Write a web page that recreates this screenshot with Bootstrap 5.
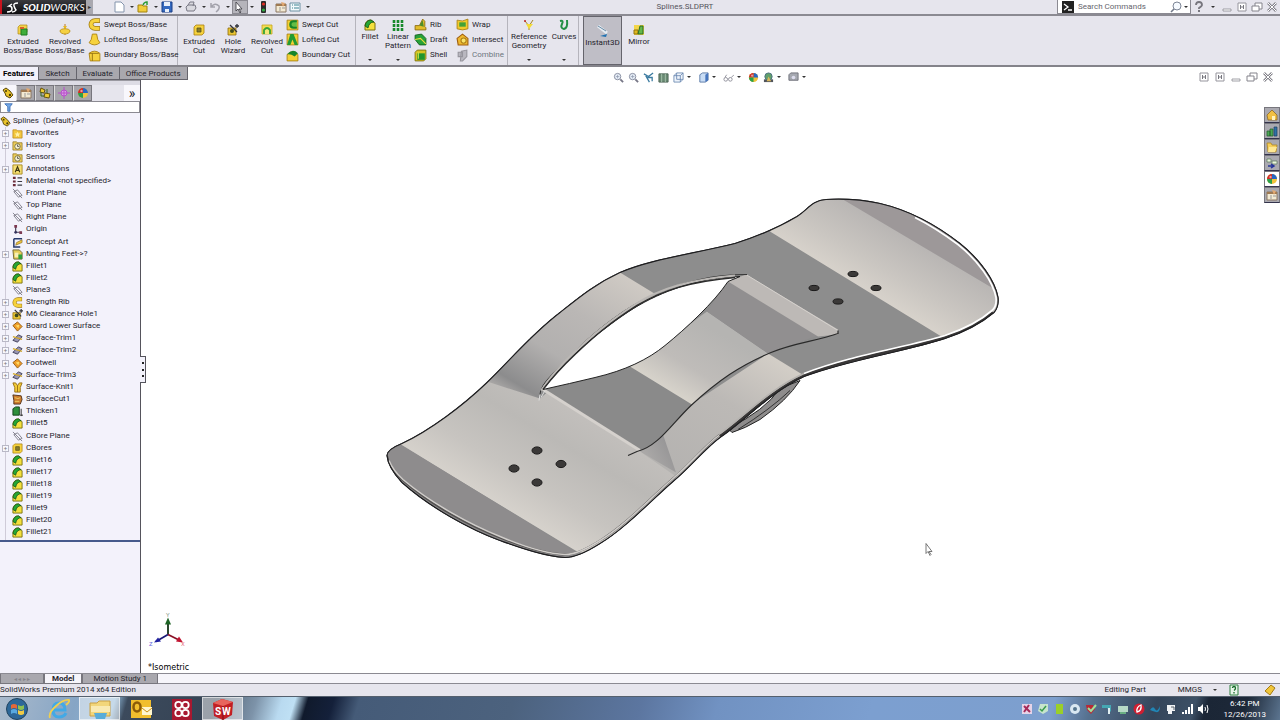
<!DOCTYPE html>
<html lang="en">
<head>
<meta charset="utf-8">
<meta name="viewport" content="width=device-width, initial-scale=1">
<title>Splines.SLDPRT</title>
<link href="https://cdn.jsdelivr.net/npm/bootstrap@5.3.0/dist/css/bootstrap.min.css" rel="stylesheet">
<style>
:root{--face:#e6e5ed;--line:#77767d;--ui:Roboto,"Noto Sans",sans-serif}
body{font-family:var(--ui);font-size:8px;line-height:12px;color:#25242c;background:#fff;overflow:hidden}
button{font-family:inherit;font-size:inherit;line-height:inherit;color:inherit;background:none;border:0;padding:0}
svg{display:block;flex:none}
.ic{width:12px;height:12px}
.titlebar{background:var(--face);height:16px;border-bottom:2px solid #8b8a92}
.brand{width:86px;background:linear-gradient(#3a3a3e,#0b0b0d);border-left:2px solid #c8141e;color:#fff;font-family:Lato,sans-serif;font-size:10px;font-weight:900;font-style:italic}
.brand span{font-weight:400}
.flyout{width:7px;background:#a9a8af;font-size:6px;color:#333}
.caret{width:10px;height:12px;display:flex;align-items:center;justify-content:center}
.caret::after{content:"";border:2px solid transparent;border-top-color:#333;border-bottom:0}
.qat{padding-left:20px}
.qat .tool{width:14px}
.pressed{background:#b5b4bb;outline:1px solid #8b8a92}
.doc{color:#55545c}
.search{width:134px;background:#fff;border:1px solid #8b8a92;border-top:0;height:14px}
.search input,.filter input{border:0;outline:0;background:transparent;min-width:0;font-size:8px;line-height:10px;padding:0 4px;color:#444}
.search input::placeholder{color:#66656d;opacity:1}
.winbtns{gap:3px;padding:0 2px}
.ribbon{background:var(--face);height:51px;border-bottom:2px solid #84838a;padding-left:2px}
.big{display:flex;flex-direction:column;align-items:center;line-height:9px;text-align:center;white-space:nowrap;padding-top:8px}
.big .ic{margin-bottom:1px}
.big.menu{padding-top:3px;position:relative}
.big.menu .caret{margin-top:auto;height:10px}
.w42{width:42px}.w34{width:34px}.w28{width:28px}.w39{width:39px}
.stack{display:flex;flex-direction:column;justify-content:space-around;padding:1px 0 2px 2px}
.stack button{display:flex;align-items:center;gap:3px;white-space:nowrap}
.stack .ic{width:13px;height:13px}
.sep{border-right:1px solid #b5b4bc}
.s92{width:92px}.s72{width:72px}.s42{width:42px}.s54{width:54px}
.instant{background:#bfbec6;border:1px solid #65646c}
.side{flex:0 0 141px;width:141px;min-width:0;position:relative;background:#f3f2fb;border-right:1px solid #55545c}
.cmdtabs{height:13px;z-index:2;position:relative;width:0}
.cmdtabs button{background:#a9a8ae;border:1px solid #65646c;border-top:0;white-space:nowrap;padding:0 6px;line-height:11px;margin-right:-1px}
.cmdtabs .on{background:#f3f2fb;font-weight:700;color:#000;border-color:#f3f2fb;padding:0 4px 0 2px}
.band{height:5px;background:#dddce5;border-top:1px solid #9a99a1}
.panetabs{height:16px;background:var(--face)}
.panetabs button{width:19px;height:16px;background:#a6a5ab;border:1px solid #77767d;border-left-color:#ddd;display:flex;align-items:center;justify-content:center}
.panetabs .on{background:#f8f7fc;border-color:#f8f7fc;width:16px}
.more{font-size:14px}
.filter{background:#fff;border:1px solid #8b8a92;height:12px;padding-left:3px}
.filter .ic{width:9px;height:9px}
.tree{padding-top:2px}
.tree,.tree ul{list-style:none;margin:0}
.tree ul{padding:0 0 1px}
.node{display:flex;align-items:center;height:12px;white-space:nowrap;padding-left:12px;position:relative;gap:3px}
.node.root{padding-left:0;gap:2px}
.node .ic{width:11px;height:11px}
.exp::before{content:"+";position:absolute;left:2px;width:7px;height:7px;border:1px solid #b9b8c6;background:#f8f8fd;font-size:6px;line-height:4px;text-align:center;color:#777}
.kids{background:linear-gradient(#cfcbd8,#cfcbd8) 5px 0/1px 100% no-repeat;padding-bottom:1px}
.rollback{height:2px;background:#465a8c}
.grip{position:absolute;left:140px;top:289px;width:6px;height:27px;border:1px solid #55545c;border-left:0;background:#f3f2fb;display:flex;flex-direction:column;justify-content:space-evenly;align-items:center;z-index:2}
.grip i{width:2px;height:2px;background:#222}
.view{position:relative;min-width:0;background:#fff}
.view .scene{width:100%;height:100%}
.hud{position:absolute;top:4px;left:0;right:0;height:12px}
.hud .ic{width:11px;height:11px}
.docbtns{position:absolute;top:4px;right:6px;gap:4px}
.task{position:absolute;right:0;top:40px;width:16px}
.task button{height:16px;width:16px;background:#aaa9b0;border:1px solid #77767d;border-bottom-color:#33334d;display:flex;align-items:center;justify-content:center}
.task .on{background:#fff}
.btabs{height:11px;border-top:1px solid #8b8a92;background:#f6f5fa;box-shadow:inset 0 -1px #8b8a92}
.btabs button{line-height:9px;padding:0 10px;background:#a9a8ae;border:1px solid #77767d;border-top:0}
.btabs .on{background:#f6f5fa;font-weight:700;padding:0 7px}
.btabs .nav4{padding:0;width:44px;color:#85848a;font-size:6px}
.status{height:12px;background:var(--face)}
.taskbar{height:24px;color:#fff;border-top:1px solid #55606e;background:linear-gradient(107deg,#a9b9cb 0,#86a5c5 6%,#8db4d4 9%,#3c4a5c 10%,#354354 17%,#5f7286 18%,#7d93a9 20%,#b9daf0 22%,#bfe0f4 23%,#101a2c 24%,#14203a 26%,#455b78 28%,#4c627e 40%,#5c76a0 50%,#7192c2 56%,#7c9fd0 68%,#7d9fce 82%,#56718f 85%,#34455a 90%,#3d5066 93%,#1b2636 94%,#1d2838 97%,#5c7590 100%)}
.app{width:41px;height:23px;display:flex;justify-content:center;align-items:center}
.app.w34{width:34px}
.app svg{width:22px;height:22px}
.app.open{background:#ffffff80;border:1px solid #ffffff90}
.tray{gap:4px;padding-right:14px}
.clock{line-height:11px;text-align:center;padding-left:10px}
</style>
</head>
<body>
<svg width="0" height="0" class="position-absolute" aria-hidden="true">
<defs>
<symbol id="boss" viewBox="0 0 12 12"><path d="M1 3 3 1h7v7l-2 2H1z" fill="#f3d34a" stroke="#b08a16" stroke-width=".7"/><path d="M4 5h6v6H4z" fill="#3fae3b" stroke="#1d7a22"/><path d="M3 3h4v2H3z" fill="#d65f2a"/></symbol>
<symbol id="revolve" viewBox="0 0 12 12"><path d="M6 0v11" stroke="#c07b1c"/><path d="M1 7c0-3 10-3 10 0 0 2-3 3-5 3S1 9 1 7z" fill="#f5d143" stroke="#b68c14" stroke-width=".8"/><path d="M4 2h4L6 5z" fill="#e6b820"/></symbol>
<symbol id="sweep" viewBox="0 0 12 12"><path d="M11 2.500H6.500C1.500 2.500 1.500 9.500 6.500 9.500H11" fill="none" stroke="#9f780e" stroke-width="4.400"/><path d="M10.500 2.500h-4C1.500 2.500 1.500 9.500 6.500 9.500h4" fill="none" stroke="#f6d23d" stroke-width="3"/></symbol>
<symbol id="loft" viewBox="0 0 12 12"><path d="M4 1h4l1 5 2 3q-5 4-10 0l2-3z" fill="#f6d23d" stroke="#a97f10" stroke-width=".8"/></symbol>
<symbol id="bound" viewBox="0 0 12 12"><path d="M1 4q5-4 10 0v7H2z" fill="#f6d23d" stroke="#a97f10" stroke-width=".8"/><path d="M1 4h9M4 4v7" stroke="#8f6d0d" stroke-width=".8"/></symbol>
<symbol id="cut" viewBox="0 0 12 12"><path d="M1 3 3 1h8v8l-2 2H1z" fill="#f6d23d" stroke="#a97f10" stroke-width=".8"/><path d="M4 4h4v4H4z" fill="#897d2c" stroke="#55521e" stroke-width=".8"/></symbol>
<symbol id="hole" viewBox="0 0 12 12"><path d="M1 4h8v7H1z" fill="#e9c533" stroke="#8f6d0d" stroke-width=".8"/><circle cx="5" cy="7" r="2" fill="#3f4b1b"/><path d="M3 1l7 7M10 0v4M8 2h4" stroke="#30323a" stroke-width="1.3"/></symbol>
<symbol id="revcut" viewBox="0 0 12 12"><path d="M1 1h10v9H1z" fill="#f3dc55" stroke="#c4a51b" stroke-width=".8"/><path d="M3 10V6q3-4 6 0v4" fill="#f6e87a" stroke="#35a436" stroke-width="1.8"/></symbol>
<symbol id="gcut" viewBox="0 0 12 12"><path d="M1 2h10v9H1z" fill="#f3d034" stroke="#a97f10" stroke-width=".8"/><path d="M10 3H7C3 3 3 9 7 9h3" fill="#64bd45" stroke="#168528" stroke-width="2"/></symbol>
<symbol id="gloft" viewBox="0 0 12 12"><path d="M1 1h10v10H1z" fill="#f3d034" stroke="#a97f10" stroke-width=".8"/><path d="M4 1h3l4 10H8L6 6l-2 5H1z" fill="#229a32"/></symbol>
<symbol id="gbound" viewBox="0 0 12 12"><path d="M1 5q5-5 10 0v6H1z" fill="#f3d034" stroke="#a97f10" stroke-width=".8"/><path d="M1 5q5-6 10-1l-3 3q-4-3-7-2z" fill="#17852a"/></symbol>
<symbol id="fillet" viewBox="0 0 12 12"><path d="M1 11V6q1-5 6-5l4 3v7z" fill="#f4e03d" stroke="#7c720f"/><path d="M1 7q1-6 6-6l3 2q-5 0-6 6z" fill="#25a934" stroke="#114f17" stroke-width=".8"/></symbol>
<symbol id="pattern" viewBox="0 0 12 12"><path d="M2 1v11M6 1v11M10 1v11" stroke="#188a2c" stroke-width="2.6" stroke-dasharray="3 1"/></symbol>
<symbol id="rib" viewBox="0 0 12 12"><path d="M1 7h4l3-6 2 2v5l1 1v2H1z" fill="#e2bd2a" stroke="#8a6a10" stroke-width=".8"/><path d="M5 7l3-5 1 6z" fill="#4c8e2b"/></symbol>
<symbol id="draft" viewBox="0 0 12 12"><path d="M1 2l6-1 4 4v6H5L1 6z" fill="#27a238" stroke="#0f5e1c" stroke-width=".8"/><path d="M1 6l5-1 5 5" stroke="#eedd3f" fill="none"/></symbol>
<symbol id="shell" viewBox="0 0 12 12"><path d="M1 3l2-2h8v8l-2 2H1z" fill="#d8c322" stroke="#77700f" stroke-width=".8"/><path d="M3 4h7v6H3z" fill="#20952d"/><path d="M4 3v6" stroke="#d1e349"/></symbol>
<symbol id="wrap" viewBox="0 0 12 12"><path d="M1 2q5 2 10-1v9q-5 2-10 0z" fill="#f2ca2b" stroke="#a97f10" stroke-width=".8"/><path d="M3 4h6v4H3z" fill="#43a237"/></symbol>
<symbol id="isect" viewBox="0 0 12 12"><path d="M1 5l5-4 5 4v6H2z" fill="#efb92f" stroke="#a05f10"/><circle cx="7" cy="7" r="2.4" fill="#f8e36a" stroke="#ab7d16"/></symbol>
<symbol id="combine" viewBox="0 0 12 12"><path d="M2 3h4v4H2zM5 2l5-1v6l-4 4H4z" fill="#b9b8c0" stroke="#96959d"/></symbol>
<symbol id="refgeo" viewBox="0 0 12 12"><path d="M2 2l4 5 4-6M6 7v4" fill="none" stroke="#a8861d"/><path d="M3 5l7 0-4 5z" fill="#f3dc34"/><circle cx="2" cy="2" r="1" fill="#b22"/></symbol>
<symbol id="curves" viewBox="0 0 12 12"><path d="M2 2q4-1 2 3t2 5q4-1 3-9" fill="none" stroke="#238f46" stroke-width="2"/></symbol>
<symbol id="instant" viewBox="0 0 12 12"><path d="M1 1l9 7" stroke="#e6edf3" stroke-width="3"/><path d="M1 1l8 5" stroke="#688aa5"/><path d="M3 11l7-2-1 3z" fill="#2172b2"/></symbol>
<symbol id="mirror" viewBox="0 0 12 12"><path d="M1 1h10v10H1z" fill="#f3d649"/><path d="M1 6h4v4H1z" fill="#e0ba1c" stroke="#937211"/><path d="M7 2h3v8H5z" fill="#65b84a" stroke="#2c6d25"/></symbol>
<symbol id="part" viewBox="0 0 12 12"><path d="M1 3l3-2 4 3 3 4-3 3-4-2-1-3z" fill="#eac42b" stroke="#594708"/><circle cx="4" cy="4" r="1" fill="#473a0a"/><circle cx="8" cy="8" r="1.2" fill="#473a0a"/></symbol>
<symbol id="props" viewBox="0 0 12 12"><path d="M1 3h10v8H1z" fill="#f3ead3" stroke="#8a7762"/><path d="M1 4h10" stroke="#9f7a53" stroke-width="2"/><path d="M5 6v4M7 7h3" stroke="#999"/><path d="M6 1l4 1-2 4z" fill="#e2a871"/></symbol>
<symbol id="config" viewBox="0 0 12 12"><path d="M2 1l4 2-1 3-4-1zM6 6l5 1-1 4-5-1z" fill="#edcc34" stroke="#65520d"/><path d="M2 5v4h3M8 2v4" stroke="#38671f" fill="none"/></symbol>
<symbol id="target" viewBox="0 0 12 12"><circle cx="6" cy="6" r="3" fill="#dd9be8" stroke="#b750ca"/><path d="M6 0v12M0 6h12" stroke="#b750ca"/></symbol>
<symbol id="ball" viewBox="0 0 12 12"><circle cx="6" cy="6" r="5" fill="#f0c33c"/><path d="M6 6V1a5 5 0 0 1 5 5z" fill="#2667c4"/><path d="M6 6V1a5 5 0 0 0-5 5z" fill="#cf2c29"/><path d="M6 6H1a5 5 0 0 0 5 5z" fill="#2ba04a"/><circle cx="4.500" cy="4" r="1.2" fill="#fff8"/></symbol>
<symbol id="funnel" viewBox="0 0 12 12"><path d="M1 1h10L8 5v6H5V5z" fill="#72a7e6" stroke="#2c61ad"/></symbol>
<symbol id="star" viewBox="0 0 12 12"><path d="M1 2h4l1 1h5v8H1z" fill="#f3c73e" stroke="#b9881a" stroke-width=".8"/><path d="M6 4l1 2h2L7.500 7.500 8 10 6 8.500 4 10l.5-2.500L3 6h2z" fill="#fff1a8"/></symbol>
<symbol id="hist" viewBox="0 0 12 12"><path d="M1 2h4l1 1h5v8H1z" fill="#efcf5b" stroke="#8c721f" stroke-width=".8"/><circle cx="6" cy="7" r="3" fill="#f7f1d0" stroke="#5a5630" stroke-width=".8"/><path d="M6 5v2h2" fill="none" stroke="#333" stroke-width=".8"/></symbol>
<symbol id="anno" viewBox="0 0 12 12"><path d="M1 1h10v10H1z" fill="#f6df72" stroke="#a98a24"/><path d="M3.500 9 6 3l2.500 6M4.500 7h3" fill="none" stroke="#3b3410" stroke-width="1.200"/></symbol>
<symbol id="mat" viewBox="0 0 12 12"><path d="M1 2h3M1 6h3M1 10h3" stroke="#6b2b39" stroke-width="2.400"/><path d="M6 2h5M6 6h5M6 10h5" stroke="#3b3a44" stroke-width="1.200"/></symbol>
<symbol id="plane" viewBox="0 0 12 12"><path d="M2 4l4-2 5 6-4 2zM1 1l10 10" fill="none" stroke="#73727e" stroke-width=".9"/></symbol>
<symbol id="origin" viewBox="0 0 12 12"><path d="M4 2v7h6" fill="none" stroke="#463f55" stroke-width="1.300"/><path d="M2.500 1h3v3h-3zM8 8h3v3H8z" fill="#7c3850"/><circle cx="4" cy="9" r="1.500" fill="#33315c"/></symbol>
<symbol id="sketch" viewBox="0 0 12 12"><path d="M2 2h9M2 2v9h7" fill="none" stroke="#26386b" stroke-width="1.600"/><path d="M4 9l1-3 6-3v3z" fill="#edc33d" stroke="#755b16" stroke-width=".6"/></symbol>
<symbol id="feet" viewBox="0 0 12 12"><path d="M1 1h7l3 3v7H2z" fill="#e4cb58" stroke="#6e6430"/><path d="M3 4h4v5H3z" fill="#f7efb6"/><path d="M7 6h4v5H7z" fill="#2e9e3d"/></symbol>
<symbol id="surf" viewBox="0 0 12 12"><path d="M1 5l5-4 5 5-5 5z" fill="#ef9d29" stroke="#92580d"/><path d="M4 5l4-1-1 4z" fill="#ffdc68"/></symbol>
<symbol id="trim" viewBox="0 0 12 12"><path d="M1 8l6-6 4 2-5 6z" fill="#9996b4" stroke="#3d3b55"/><path d="M1 4l10 3" stroke="#d1a72b" stroke-width="1.500"/></symbol>
<symbol id="knit" viewBox="0 0 12 12"><path d="M1 1h3l2 3 2-3h3L9 6v5H3V6z" fill="#f3cd38" stroke="#976c12"/><path d="M6 4v7" stroke="#976c12"/></symbol>
<symbol id="scut" viewBox="0 0 12 12"><path d="M1 1l9 1 1 4-2 5H2V7z" fill="#cd7b2d" stroke="#51311a"/><path d="M3 4q4 2 6 0M3 8h5" stroke="#f0cf62" fill="none"/></symbol>
<symbol id="thick" viewBox="0 0 12 12"><path d="M1 3l3-2h4v9H1z" fill="#2e8f3b" stroke="#123f18"/><path d="M10 3v8M9 10h3" stroke="#222"/></symbol>
<symbol id="page" viewBox="0 0 12 12"><path d="M2 1h6l3 3v7H2z" fill="#fff" stroke="#8494ac"/></symbol>
<symbol id="open" viewBox="0 0 12 12"><path d="M1 4h4l1 1h4v6H1z" fill="#f1cd3b" stroke="#a2820e"/><path d="M6 4q1-3 4-3v3" fill="none" stroke="#2d9b38" stroke-width="1.500"/></symbol>
<symbol id="save" viewBox="0 0 12 12"><path d="M1 1h10v10H1z" fill="#356ac0" stroke="#1b3e86"/><path d="M3 1h6v4H3zM4 8h4v3H4z" fill="#e9f0fa"/></symbol>
<symbol id="print" viewBox="0 0 12 12"><path d="M3 4l2-3h4L8 5M1 6l2-2h7l1 3-2 3H2z" fill="#d9d9df" stroke="#797985"/></symbol>
<symbol id="undo" viewBox="0 0 12 12"><path d="M2 2v4h4M2 6q4-5 8-1 1 3-3 6" fill="none" stroke="#a2a1ab" stroke-width="1.500"/></symbol>
<symbol id="arrow" viewBox="0 0 12 12"><path d="M3 1v9l2-2 2 4 1-1-2-3h3z" fill="#fff" stroke="#44434b" stroke-width=".9"/></symbol>
<symbol id="light" viewBox="0 0 12 12"><rect x="4" y="0" width="5" height="12" rx="1" fill="#2b2b2b"/><circle cx="6.500" cy="3" r="1.600" fill="#e02d24"/><circle cx="6.500" cy="9" r="1.600" fill="#2fab43"/></symbol>
<symbol id="list" viewBox="0 0 12 12"><path d="M1 2h10v8H1z" fill="#f3f9fb" stroke="#6d91a3"/><path d="M3 4h1M3 7h1M5 4h5M5 7h5" stroke="#3d8392"/></symbol>
<symbol id="mag" viewBox="0 0 12 12"><circle cx="5" cy="5" r="3.500" fill="#eaf1fa" stroke="#81889b"/><path d="M8 8l3 3" stroke="#777787" stroke-width="2"/><path d="M3 5h4M5 3v4" stroke="#8e97ac" stroke-width=".8"/></symbol>
<symbol id="lens" viewBox="0 0 12 12"><circle cx="7" cy="5" r="4" fill="#f6faff" stroke="#7d8696"/><path d="M4 8l-3 3" stroke="#727a8a" stroke-width="1.600"/></symbol>
<symbol id="prev" viewBox="0 0 12 12"><path d="M1 2l5 3 5-4M3 4l4 7M5 6h5v4" fill="none" stroke="#3a7aa0" stroke-width="1.400"/></symbol>
<symbol id="section" viewBox="0 0 12 12"><path d="M1 2h10v9H1z" fill="#698a74" stroke="#4c6455"/><path d="M4 2v9M8 2v9" stroke="#a9c4ad"/></symbol>
<symbol id="cube" viewBox="0 0 12 12"><path d="M1 4h7v7H1zM1 4l3-3h7v7l-3 3M8 4l3-3M4 1v7h7" fill="#dbe8f8" fill-opacity=".5" stroke="#6785af" stroke-width=".9"/></symbol>
<symbol id="shaded" viewBox="0 0 12 12"><path d="M2 3l3-2h6v8l-3 2H2z" fill="#c9ddf5" stroke="#5877a5"/><path d="M8 3l3-2v8l-3 2z" fill="#4775bd"/></symbol>
<symbol id="glasses" viewBox="0 0 12 12"><circle cx="3" cy="8" r="2" fill="none" stroke="#8e8e99"/><circle cx="8" cy="8" r="2" fill="none" stroke="#8e8e99"/><path d="M2 6l2-3M9 6l3-3" stroke="#8e8e99"/></symbol>
<symbol id="scene" viewBox="0 0 12 12"><path d="M1 8h10v3H1z" fill="#50545c"/><circle cx="6" cy="5" r="4" fill="#62a06c" stroke="#486d80"/><path d="M4 10l2-5 3 5" fill="#d9b65a"/></symbol>
<symbol id="screen" viewBox="0 0 12 12"><path d="M1 3l2-2h8v8H1z" fill="#a6a9b1" stroke="#6d7078"/><circle cx="6" cy="6" r="2" fill="#dde"/></symbol>
<symbol id="cmd" viewBox="0 0 12 12"><path d="M0 0h12v12H0z" fill="#222"/><path d="M2 3l4 3-4 3M6 9h4" stroke="#fff" fill="none" stroke-width="1.300"/></symbol>
<symbol id="help" viewBox="0 0 12 12"><path d="M3 4q0-3 3-3t3 3q0 1-3 3v1" fill="none" stroke="#77767e" stroke-width="1.800"/><path d="M5 9h2v2H5z" fill="#77767e"/></symbol>
<symbol id="min" viewBox="0 0 12 12"><path d="M2 8h8v2H2z" fill="#fff" stroke="#8b8a92" stroke-width=".8"/></symbol>
<symbol id="tile" viewBox="0 0 12 12"><path d="M2 2h8v8H2z" fill="#fff" stroke="#96959d"/><path d="M4.500 4v4M7.500 4v4M4 6h4" stroke="#77767e"/></symbol>
<symbol id="rest" viewBox="0 0 12 12"><path d="M4 2h7v6H4z" fill="#fff" stroke="#85848c"/><path d="M1 5h7v5H1z" fill="#fff" stroke="#85848c"/></symbol>
<symbol id="close" viewBox="0 0 12 12"><path d="M2 2l8 8M10 2l-8 8" stroke="#85848c" stroke-width="2.600"/><path d="M2 2l8 8M10 2l-8 8" stroke="#fff"/></symbol>
<symbol id="home" viewBox="0 0 12 12"><path d="M1 6l5-5 5 5v5H2z" fill="#f1bf42" stroke="#8d6825" stroke-width=".8"/><path d="M6 7h3v4H6z" fill="#fff2bd"/></symbol>
<symbol id="books" viewBox="0 0 12 12"><path d="M1 6h3v5H1zM4 4h3v7H4z" fill="#4aa853" stroke="#245a2c" stroke-width=".7"/><path d="M8 2h3v9H8z" fill="#2e71a6" stroke="#1c3c5e" stroke-width=".7"/></symbol>
<symbol id="folder" viewBox="0 0 12 12"><path d="M1 2h4l1 2h5l-1 7H2z" fill="#f6cf59" stroke="#b08722" stroke-width=".8"/><path d="M3 6h8l-2 5H2z" fill="#ffe894"/></symbol>
<symbol id="palette" viewBox="0 0 12 12"><path d="M1 2h4v3H1zM6 4h5v3H6z" fill="#eaf5dc" stroke="#637f65" stroke-width=".8"/><path d="M2 9h5M5 7l3 2-3 2" stroke="#26349a" stroke-width="1.500" fill="none"/></symbol>
<linearGradient id="gl" gradientUnits="userSpaceOnUse" x1="488" y1="498" x2="550" y2="394"><stop stop-color="#d6d2cc"/><stop offset=".3" stop-color="#c7c4c0"/><stop offset=".7" stop-color="#bbb9b6"/><stop offset="1" stop-color="#c2bfbc"/></linearGradient>
<linearGradient id="gr" gradientUnits="userSpaceOnUse" x1="856" y1="284" x2="890" y2="227"><stop stop-color="#d7d2cb"/><stop offset=".4" stop-color="#cac6c1"/><stop offset="1" stop-color="#b9b6b4"/></linearGradient>
<linearGradient id="ga" gradientUnits="userSpaceOnUse" x1="638" y1="283" x2="555" y2="421"><stop stop-color="#cfcac4"/><stop offset=".35" stop-color="#bab7b5"/><stop offset=".64" stop-color="#b2b0af"/><stop offset=".92" stop-color="#8c8c8d"/><stop offset="1" stop-color="#a9a7a6"/></linearGradient>
<linearGradient id="gb" gradientUnits="userSpaceOnUse" x1="786" y1="364" x2="706" y2="498"><stop stop-color="#d3cec7"/><stop offset=".4" stop-color="#bcb9b6"/><stop offset="1" stop-color="#b4b2b0"/></linearGradient>
<linearGradient id="gf" gradientUnits="userSpaceOnUse" x1="661" y1="384" x2="699" y2="320"><stop stop-color="#d6d2ca"/><stop offset=".4" stop-color="#bfbcb9"/><stop offset="1" stop-color="#b5b4b2"/></linearGradient>
<linearGradient id="gt" gradientUnits="userSpaceOnUse" x1="645" y1="452" x2="690" y2="428"><stop stop-color="#aaa8a7"/><stop offset=".5" stop-color="#969596"/><stop offset="1" stop-color="#b3b0ae"/></linearGradient>
<path id="outline" d="M387 455Q387 449 402 443C430 430 463 405 487 382C510 360 530 335 560 312C580 296 596 283 620 272C650 259 690 254 735 243Q770 232 797 216C808 209 812 200 826 199C845 198 862 199 880 203C910 210 937 225 960 243C980 259 995 280 998 297Q999 306 994 312Q975 328 945 338C905 351 850 359 804 376C770 392 745 420 720 437C705 448 690 467 673 481C650 501 625 528 600 543Q578 557 565 557C545 556 520 547 500 540C470 529 430 507 402 482Q388 467 387 455Z"/>
<clipPath id="cb"><use href="#outline"/></clipPath>
</defs>
</svg>

<div class="d-flex flex-column vh-100">
<header class="titlebar d-flex align-items-center">
  <div class="brand d-flex align-items-center align-self-stretch ps-1 gap-1"><svg width="13" height="11" viewBox="0 0 13 11"><path d="M1 10q5 0 5-3T3 4l3-2M12 1Q7 1 8 4t2 4q-1 2-4 2" fill="none" stroke="#fff" stroke-width="1.500"/></svg><div>SOLID<span>WORKS</span></div></div>
  <button class="flyout align-self-stretch" aria-label="Show menu">▸</button>
  <div class="qat d-flex align-items-center">
    <button class="tool" aria-label="New"><svg class="ic"><use href="#page"/></svg></button><span class="caret"></span>
    <button class="tool" aria-label="Open"><svg class="ic"><use href="#open"/></svg></button><span class="caret"></span>
    <button class="tool" aria-label="Save"><svg class="ic"><use href="#save"/></svg></button><span class="caret"></span>
    <button class="tool" aria-label="Print"><svg class="ic"><use href="#print"/></svg></button><span class="caret"></span>
    <button class="tool" aria-label="Undo"><svg class="ic"><use href="#undo"/></svg></button><span class="caret"></span>
    <button class="tool pressed" aria-label="Select"><svg class="ic"><use href="#arrow"/></svg></button><span class="caret"></span>
    <button class="tool" aria-label="Rebuild"><svg class="ic"><use href="#light"/></svg></button>
    <button class="tool ms-1" aria-label="File properties"><svg class="ic"><use href="#props"/></svg></button>
    <button class="tool" aria-label="Options"><svg class="ic"><use href="#list"/></svg></button><span class="caret"></span>
  </div>
  <div class="doc flex-grow-1 text-center">Splines.SLDPRT</div>
  <div class="search d-flex align-items-center ps-1"><svg class="ic"><use href="#cmd"/></svg><input class="flex-grow-1" type="search" placeholder="Search Commands" aria-label="Search Commands"><svg class="ic"><use href="#lens"/></svg><span class="caret"></span></div>
  <div class="winbtns d-flex align-items-center">
    <button aria-label="Help"><svg class="ic"><use href="#help"/></svg></button><span class="caret"></span>
    <button aria-label="Minimize"><svg class="ic"><use href="#min"/></svg></button>
    <button aria-label="Tile"><svg class="ic"><use href="#tile"/></svg></button>
    <button aria-label="Restore"><svg class="ic"><use href="#rest"/></svg></button>
    <button aria-label="Close"><svg class="ic"><use href="#close"/></svg></button>
  </div>
</header>

<div class="ribbon d-flex">
  <button class="big w42"><svg class="ic"><use href="#boss"/></svg>Extruded<br>Boss/Base</button>
  <button class="big w42"><svg class="ic"><use href="#revolve"/></svg>Revolved<br>Boss/Base</button>
  <div class="stack s92 sep">
    <button><svg class="ic"><use href="#sweep"/></svg>Swept Boss/Base</button>
    <button><svg class="ic"><use href="#loft"/></svg>Lofted Boss/Base</button>
    <button><svg class="ic"><use href="#bound"/></svg>Boundary Boss/Base</button>
  </div>
  <div class="d-flex ps-1">
  <button class="big w34"><svg class="ic"><use href="#cut"/></svg>Extruded<br>Cut</button>
  <button class="big w34"><svg class="ic"><use href="#hole"/></svg>Hole<br>Wizard</button>
  <button class="big w34"><svg class="ic"><use href="#revcut"/></svg>Revolved<br>Cut</button>
  </div>
  <div class="stack s72 sep">
    <button><svg class="ic"><use href="#gcut"/></svg>Swept Cut</button>
    <button><svg class="ic"><use href="#gloft"/></svg>Lofted Cut</button>
    <button><svg class="ic"><use href="#gbound"/></svg>Boundary Cut</button>
  </div>
  <button class="big menu w28"><svg class="ic"><use href="#fillet"/></svg>Fillet<span class="caret"></span></button>
  <button class="big menu w28"><svg class="ic"><use href="#pattern"/></svg>Linear<br>Pattern<span class="caret"></span></button>
  <div class="stack s42">
    <button><svg class="ic"><use href="#rib"/></svg>Rib</button>
    <button><svg class="ic"><use href="#draft"/></svg>Draft</button>
    <button><svg class="ic"><use href="#shell"/></svg>Shell</button>
  </div>
  <div class="stack s54 sep">
    <button><svg class="ic"><use href="#wrap"/></svg>Wrap</button>
    <button><svg class="ic"><use href="#isect"/></svg>Intersect</button>
    <button class="text-secondary"><svg class="ic"><use href="#combine"/></svg>Combine</button>
  </div>
  <button class="big menu w42"><svg class="ic"><use href="#refgeo"/></svg>Reference<br>Geometry<span class="caret"></span></button>
  <div class="d-flex sep"><button class="big menu w28"><svg class="ic"><use href="#curves"/></svg>Curves<span class="caret"></span></button></div>
  <div class="d-flex ps-1"><button class="big w39 instant"><svg class="ic"><use href="#instant"/></svg>Instant3D</button></div>
  <button class="big w34"><svg class="ic"><use href="#mirror"/></svg>Mirror</button>
</div>

<main class="d-flex flex-grow-1">
  <aside class="side d-flex flex-column">
    <div class="cmdtabs d-flex">
      <button class="on">Features</button><button>Sketch</button><button>Evaluate</button><button>Office Products</button>
    </div>
    <div class="band"></div>
    <div class="panetabs d-flex align-items-center">
      <button class="on" aria-label="Feature tree"><svg class="ic"><use href="#part"/></svg></button>
      <button aria-label="Properties"><svg class="ic"><use href="#props"/></svg></button>
      <button aria-label="Configurations"><svg class="ic"><use href="#config"/></svg></button>
      <button aria-label="Dimensions"><svg class="ic"><use href="#target"/></svg></button>
      <button aria-label="Display"><svg class="ic"><use href="#ball"/></svg></button>
      <button class="more on ms-auto" aria-label="Show display pane">»</button>
    </div>
    <div class="filter d-flex align-items-center"><svg class="ic"><use href="#funnel"/></svg><input class="flex-grow-1" type="text" aria-label="Filter tree"></div>
    <ul class="tree ps-0">
      <li><div class="node root"><svg class="ic"><use href="#part"/></svg>Splines&nbsp; (Default)-&gt;?</div>
      <div class="kids">
      <ul>
        <li class="node exp"><svg class="ic"><use href="#star"/></svg>Favorites</li>
        <li class="node exp"><svg class="ic"><use href="#hist"/></svg>History</li>
        <li class="node"><svg class="ic"><use href="#hist"/></svg>Sensors</li>
        <li class="node exp"><svg class="ic"><use href="#anno"/></svg>Annotations</li>
        <li class="node"><svg class="ic"><use href="#mat"/></svg>Material &lt;not specified&gt;</li>
        <li class="node"><svg class="ic"><use href="#plane"/></svg>Front Plane</li>
        <li class="node"><svg class="ic"><use href="#plane"/></svg>Top Plane</li>
        <li class="node"><svg class="ic"><use href="#plane"/></svg>Right Plane</li>
        <li class="node"><svg class="ic"><use href="#origin"/></svg>Origin</li>
      </ul>
      <ul>
        <li class="node"><svg class="ic"><use href="#sketch"/></svg>Concept Art</li>
        <li class="node exp"><svg class="ic"><use href="#feet"/></svg>Mounting Feet-&gt;?</li>
        <li class="node"><svg class="ic"><use href="#fillet"/></svg>Fillet1</li>
        <li class="node"><svg class="ic"><use href="#fillet"/></svg>Fillet2</li>
        <li class="node"><svg class="ic"><use href="#plane"/></svg>Plane3</li>
        <li class="node exp"><svg class="ic"><use href="#sweep"/></svg>Strength Rib</li>
        <li class="node exp"><svg class="ic"><use href="#hole"/></svg>M6 Clearance Hole1</li>
        <li class="node exp"><svg class="ic"><use href="#surf"/></svg>Board Lower Surface</li>
        <li class="node exp"><svg class="ic"><use href="#trim"/></svg>Surface-Trim1</li>
        <li class="node exp"><svg class="ic"><use href="#trim"/></svg>Surface-Trim2</li>
      </ul>
      <ul>
        <li class="node exp"><svg class="ic"><use href="#surf"/></svg>Footwell</li>
        <li class="node exp"><svg class="ic"><use href="#trim"/></svg>Surface-Trim3</li>
        <li class="node"><svg class="ic"><use href="#knit"/></svg>Surface-Knit1</li>
        <li class="node"><svg class="ic"><use href="#scut"/></svg>SurfaceCut1</li>
        <li class="node"><svg class="ic"><use href="#thick"/></svg>Thicken1</li>
        <li class="node"><svg class="ic"><use href="#fillet"/></svg>Fillet5</li>
      </ul>
      <ul>
        <li class="node"><svg class="ic"><use href="#plane"/></svg>CBore Plane</li>
        <li class="node exp"><svg class="ic"><use href="#cut"/></svg>CBores</li>
        <li class="node"><svg class="ic"><use href="#fillet"/></svg>Fillet16</li>
        <li class="node"><svg class="ic"><use href="#fillet"/></svg>Fillet17</li>
        <li class="node"><svg class="ic"><use href="#fillet"/></svg>Fillet18</li>
        <li class="node"><svg class="ic"><use href="#fillet"/></svg>Fillet19</li>
        <li class="node"><svg class="ic"><use href="#fillet"/></svg>Fillet9</li>
        <li class="node"><svg class="ic"><use href="#fillet"/></svg>Fillet20</li>
        <li class="node"><svg class="ic"><use href="#fillet"/></svg>Fillet21</li>
      </ul>
      </div></li>
    </ul>
    <div class="rollback"></div>
    <div class="grip"><i></i><i></i><i></i></div>
  </aside>

  <section class="view flex-grow-1">
    <svg class="scene position-absolute" viewBox="141 67 1139 605" role="img" aria-label="Board model, isometric view">
      <path d="M800 380Q787 400 760 419Q745 428 732 432L728 428Q765 410 780 388z" fill="#8e8c8c" stroke="#222"/>
      <path d="M790 390Q770 409 738 429" fill="none" stroke="#333"/>
      <use href="#outline" fill="#1c1c1e" stroke="#1c1c1e"/>
      <g clip-path="url(#cb)">
        <path d="M380 180H1010V570H380z" fill="#8d8d8d"/>
        <path d="M845 201 990 286 1010 300V180H830z" fill="#9d9899"/>
        <path d="M770 231 943 337 1000 360 1010 297 990 286 843 199 800 190z" fill="url(#gr)"/>
        <path d="M620 272 656 294 600 345 543 389 540 398 487 382 480 370 600 250z" fill="url(#ga)"/>
        <path d="M768 353 804 375 740 450 673 484 630 455 691 404z" fill="url(#gb)"/>
        <path d="M640 451 663 434 676 472z" fill="url(#gt)"/>
        <path d="M400 444 577 551 610 560 676 476 640 451 547 392 540 398 487 381 390 430z" fill="url(#gl)"/>
        <path d="M380 440 401 444 577 552 560 575 380 520z" fill="#8e8c8d"/>
        <!-- footwell floor -->
        <path d="M543 389C580 381 605 376 630 366L692 404C675 421 658 443 640 450z" fill="#8a8a8a"/>
        <path d="M630 366C660 353 680 330 707 311L768 353C735 368 720 380 692 404z" fill="url(#gf)"/>
        <path d="M707 311 728 281 818 335 768 353z" fill="#918f90"/>
        <path d="M728 281 746 274 838 329 838 334 818 336z" fill="#bdb9b6"/>
        <path d="M543 389 640 450" stroke="#d5d1cd" stroke-width="3"/>
        <path d="M746 274 838 330" stroke="#d5d1cd"/>
        <!-- left opening -->
        <path d="M543 389C546 383 575 350 605 328C635 304 665 289 700 281Q715 277 740 276L728 281C714 302 686 328 665 345C648 359 625 370 595 377Q570 383 543 389z" fill="#fff" stroke="#222"/>
        <path d="M540 394Q540 386 552 374C575 350 590 335 612 319C640 298 668 286 700 279Q720 274 747 274" fill="none" stroke="#343434" stroke-width="1"/>
        <path d="M541 390Q555 370 573 353C592 335 607 322 635 304C660 288 690 279 735 275" fill="none" stroke="#bbb8b5" stroke-width="2"/>
        <path d="M543 389Q557 371 575 354C594 336 609 323 637 305C662 290 690 281 735 277" fill="none" stroke="#2c2c2c" stroke-width="1.500"/>
        <path d="M838 330v3C815 341 795 342 771 352C740 365 718 380 691 405C672 423 658 446 637 451l-9 4" fill="none" stroke="#2a2a2a" stroke-width="1.200"/>
        <path d="M540 394l-1 6M545 390l-4 7" stroke="#ddd" fill="none"/>
        <path d="M387 455Q388 467 402 479C430 504 470 526 500 537Q540 553 565 554Q578 554 600 540C625 525 650 498 673 478C690 464 705 445 720 434" fill="none" stroke="#555352" stroke-width="2"/>
        <path d="M389 460Q393 470 403 479C430 502 470 524 500 536Q540 553 565 554Q578 554 600 540C625 525 650 498 673 478C690 464 705 445 720 434" fill="none" stroke="#d0cdca" stroke-width="1.500"/>
        <path d="M720 436C745 418 770 391 804 375C850 357 905 349 945 337Q975 327 993 312" fill="none" stroke="#3a3838" stroke-width="3"/>
        <path d="M720 433C745 415 770 388 804 373" fill="none" stroke="#b5b2af" stroke-width="1.500"/>
        <path d="M804 373C850 355 905 347 945 335Q975 325 992 310Q997 306 996 297C993 281 978 260 958 244Q935 227 915 217" fill="none" stroke="#fff" stroke-width="1.700"/>
      </g>
      <use href="#outline" fill="none" stroke="#1e1e20" stroke-width="1.200"/>
      <g fill="#3b3938" stroke="#1b1a1a" stroke-width="1"><ellipse cx="537" cy="450" rx="5" ry="3.600"/><ellipse cx="514" cy="468" rx="5" ry="3.600"/><ellipse cx="561" cy="463.500" rx="5" ry="3.600"/><ellipse cx="537" cy="482" rx="5" ry="3.600"/><ellipse cx="853" cy="273.500" rx="5" ry="2.600"/><ellipse cx="876" cy="287.500" rx="5" ry="2.600"/><ellipse cx="814" cy="287.500" rx="5" ry="2.600"/><ellipse cx="838" cy="301" rx="5" ry="2.600"/></g>
      <path d="M926 543v10l2-2 2 4 1-1-2-3h3z" fill="#fff" stroke="#555" stroke-width=".8"/>
      <g stroke-width="1.800"><path d="M168 634v-12" stroke="#163118"/><path d="M168 634l-12 7" stroke="#1a1a78"/><path d="M168 634l12 6" stroke="#8b1226"/></g>
      <path d="M165 624l3-7 3 7z" fill="#1d6324"/><path d="M154 642l4-5 3 4z" fill="#20209f"/><path d="M183 642l-7-1 3-5z" fill="#c21532"/>
      <g font-size="6"><text x="166" y="616" fill="#8a9a8a">Y</text><text x="149" y="645" fill="#6c6ce0">Z</text><text x="181" y="645" fill="#e87888">X</text></g>
      <text x="148" y="669" font-family="DejaVu Sans,sans-serif" font-size="8" fill="#000">*Isometric</text>
    </svg>
    <div class="hud d-flex justify-content-center align-items-center">
      <button class="me-1" aria-label="Zoom to fit"><svg class="ic"><use href="#mag"/></svg></button>
      <button class="me-1" aria-label="Zoom area"><svg class="ic"><use href="#mag"/></svg></button>
      <button class="me-1" aria-label="Previous view"><svg class="ic"><use href="#prev"/></svg></button>
      <button class="me-1" aria-label="Section"><svg class="ic"><use href="#section"/></svg></button>
      <button aria-label="Orientation"><svg class="ic"><use href="#cube"/></svg></button><span class="caret me-1"></span>
      <button aria-label="Display style"><svg class="ic"><use href="#shaded"/></svg></button><span class="caret me-1"></span>
      <button aria-label="Hide or show"><svg class="ic"><use href="#glasses"/></svg></button><span class="caret me-1"></span>
      <button class="me-1" aria-label="Appearance"><svg class="ic"><use href="#ball"/></svg></button>
      <button aria-label="Scene"><svg class="ic"><use href="#scene"/></svg></button><span class="caret me-1"></span>
      <button aria-label="View settings"><svg class="ic"><use href="#screen"/></svg></button><span class="caret"></span>
    </div>
    <div class="docbtns d-flex">
      <button aria-label="Tile"><svg class="ic"><use href="#tile"/></svg></button>
      <button aria-label="Tile all"><svg class="ic"><use href="#tile"/></svg></button>
      <button aria-label="Minimize document"><svg class="ic"><use href="#min"/></svg></button>
      <button aria-label="Restore document"><svg class="ic"><use href="#rest"/></svg></button>
      <button aria-label="Close document"><svg class="ic"><use href="#close"/></svg></button>
    </div>
    <div class="task d-flex flex-column">
      <button aria-label="Resources"><svg class="ic"><use href="#home"/></svg></button>
      <button aria-label="Design library"><svg class="ic"><use href="#books"/></svg></button>
      <button aria-label="File explorer"><svg class="ic"><use href="#folder"/></svg></button>
      <button aria-label="View palette"><svg class="ic"><use href="#palette"/></svg></button>
      <button class="on" aria-label="Appearances"><svg class="ic"><use href="#ball"/></svg></button>
      <button aria-label="Custom properties"><svg class="ic"><use href="#props"/></svg></button>
    </div>
  </section>
</main>

<div class="btabs d-flex">
  <button class="nav4" aria-label="Scroll tabs">◂ ◂ ▸ ▸</button><button class="on">Model</button><button>Motion Study 1</button>
</div>
<footer class="status d-flex align-items-center">
  <span>SolidWorks Premium 2014 x64 Edition</span>
  <span class="ms-auto">Editing Part</span><span class="ms-4 ps-2">MMGS</span><span class="caret ms-2"></span>
  <svg class="ic ms-2" viewBox="0 0 12 12"><path d="M2 1h8v10H2z" fill="#e9f6ea" stroke="#2e8140"/><path d="M4.500 4q0-1.500 1.500-1.500T7.500 4 6 6.500M6 8v1.500" stroke="#176b2a" fill="none" stroke-width="1.300"/></svg>
  <svg class="ic ms-4 me-1" viewBox="0 0 12 12"><path d="M1 7l6-6 4 3-5 7z" fill="#f0c63a" stroke="#a67b13"/></svg>
</footer>
<nav class="taskbar d-flex align-items-center">
  <button class="app w34" aria-label="Start"><svg viewBox="0 0 22 22"><circle cx="11" cy="11" r="10.500" fill="#2d6798" stroke="#214360"/><path d="M5 7q3-2 6 0v4q-3-2-6 0z" fill="#e3683a"/><path d="M12 7q3 2 6 0v4q-3 2-6 0z" fill="#8cc152"/><path d="M5 12q3-2 6 0v4q-3-2-6 0z" fill="#58a8df"/><path d="M12 12q3 2 6 0v4q-3 2-6 0z" fill="#f1ca45"/></svg></button>
  <button class="app ms-1" aria-label="Internet Explorer"><svg viewBox="0 0 22 22"><path d="M18 15q-2 4-7 4-6 0-6-7t6-7q6 0 6 7H6" fill="none" stroke="#42a9e6" stroke-width="3"/><path d="M2 20Q0 15 8 8t13-6q1 2-3 5" fill="none" stroke="#f0cf50" stroke-width="1.800"/></svg></button>
  <button class="app open" aria-label="Explorer"><svg viewBox="0 0 22 22"><path d="M1 5h7l2-2h11v15H1z" fill="#f2d67a" stroke="#caa045"/><path d="M2 8h19v6H2z" fill="#f9eab2"/><path d="M5 15h13l-2 6H7z" fill="#58acd9"/></svg></button>
  <button class="app" aria-label="Outlook"><svg viewBox="0 0 22 22"><path d="M1 2h20v18H1z" fill="#f1be2d"/><path d="M12 9h10v8H12z" fill="#fff6cf"/><ellipse cx="7" cy="9" rx="3.500" ry="4.500" fill="none" stroke="#8b5b08" stroke-width="2.500"/><path d="M12 10l5 4 5-4" stroke="#c88f15" fill="none"/></svg></button>
  <button class="app" aria-label="Clover"><svg viewBox="0 0 22 22"><path d="M1 1h20v21H1z" fill="#a81830"/><g fill="none" stroke="#fff" stroke-width="1.800"><circle cx="7.500" cy="7" r="3.200"/><circle cx="14.500" cy="7" r="3.200"/><circle cx="7.500" cy="15" r="3.200"/><circle cx="14.500" cy="15" r="3.200"/></g></svg></button>
  <button class="app open" aria-label="SolidWorks"><svg viewBox="0 0 22 22"><path d="M1 5l9-4 11 3-1 13-9 5-9-4z" fill="#c21f24"/><path d="M1 5l10 3 10-4-11-3z" fill="#e8645d"/><path d="M11 8v14" stroke="#7c1013"/><text x="3" y="17" font-size="10" font-weight="700" fill="#fff">S</text><text x="10" y="17" font-size="10" font-weight="700" fill="#fff">W</text></svg></button>
  <div class="tray d-flex align-items-center ms-auto">
    <svg class="ic" viewBox="0 0 12 12"><path d="M1 1h10v10H1z" fill="#e6d4e8"/><path d="M3 3l6 6M8 2l-5 7" stroke="#a52a5a" stroke-width="2"/></svg>
    <svg class="ic" viewBox="0 0 12 12"><path d="M3 1h8v7L6 11 1 8z" fill="#c7e5cd"/><path d="M3 6l2 2 4-5" stroke="#399b4d" stroke-width="1.500" fill="none"/></svg>
    <svg class="ic" viewBox="0 0 12 12"><path d="M3 1h7v10H3z" fill="#9bcf28"/></svg>
    <svg class="ic" viewBox="0 0 12 12"><circle cx="6" cy="6" r="5" fill="#d9e8f2"/><circle cx="6" cy="6" r="2" fill="#55758e"/></svg>
    <svg class="ic" viewBox="0 0 12 12"><path d="M1 2h7l2 4-4 5-4-4z" fill="#b92834"/><path d="M3 5l3 3 5-6" stroke="#9fe09b" stroke-width="2" fill="none"/></svg>
    <svg class="ic" viewBox="0 0 12 12"><path d="M1 2h9v7L6 5H1z" fill="#45a7b3"/><path d="M8 5v6" stroke="#e0eff2" stroke-width="2"/></svg>
    <svg class="ic" viewBox="0 0 12 12"><path d="M1 3h10v6H1z" fill="#b7d9c6"/><path d="M3 9h6v2H3z" fill="#6aaf83"/></svg>
    <svg class="ic" viewBox="0 0 12 12"><circle cx="6" cy="6" r="5.500" fill="#d01e31"/><path d="M4 9q-1-5 4-7 1 6-4 7z" fill="none" stroke="#fff" stroke-width="1.300"/></svg>
    <svg class="ic" viewBox="0 0 12 12"><path d="M1 7q3-5 5-1t5-3q0 7-4 6T1 7z" fill="#2186b6"/></svg>
    <svg class="ic" viewBox="0 0 12 12"><path d="M2 2h8v6H7v3H3V8H2z" fill="#f1f3f5"/><path d="M6 4h3v3" stroke="#58626d" fill="none"/></svg>
    <svg class="ic" viewBox="0 0 12 12"><path d="M1 11V9h2v2zM4 11V7h2v4zM7 11V4h2v7zM10 11V1h2v10z" fill="#fff"/></svg>
    <svg class="ic" viewBox="0 0 12 12"><path d="M1 4h2l3-3v10L3 8H1z" fill="#fff"/><path d="M8 4q1 2 0 4M10 2q2 4 0 8" stroke="#fff" fill="none"/></svg>
    <div class="clock">6:42 PM<br>12/26/2013</div>
  </div>
</nav>
</div>
<script src="https://cdn.jsdelivr.net/npm/bootstrap@5.3.0/dist/js/bootstrap.bundle.min.js"></script>
</body>
</html>
